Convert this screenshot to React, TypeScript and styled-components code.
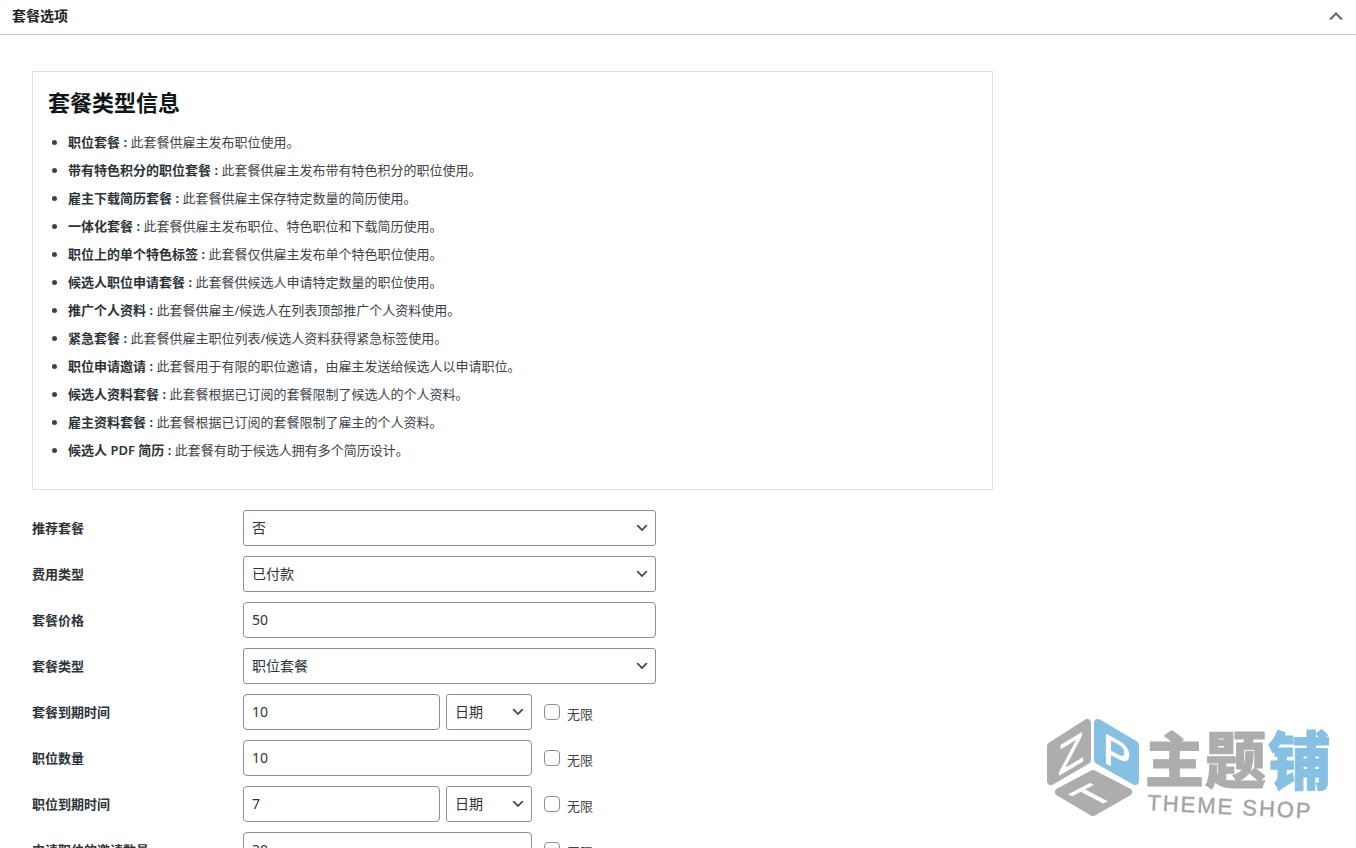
import React, { useState } from 'react';
import styled, { createGlobalStyle } from 'styled-components';

const GlobalStyle = createGlobalStyle`
  *, *::before, *::after { box-sizing: border-box; }
  body {
    margin: 0;
    background: #fff;
    color: #3c434a;
    font-family: 'Noto Sans', 'Noto Sans CJK SC', sans-serif;
    font-size: 13px;
    line-height: 18px;
  }
`;

const Page = styled.div`
  min-height: 100vh;
`;

const PanelHeader = styled.header`
  display: flex;
  align-items: center;
  justify-content: space-between;
  height: 35px;
  padding: 0 10px 2px 12px;
  border-bottom: 1px solid #c3c4c7;
`;

const PanelTitle = styled.h2`
  margin: 0;
  font-size: 14px;
  line-height: 20px;
  font-weight: 600;
  color: #1d2327;
`;

const ToggleButton = styled.button`
  display: block;
  width: 20px;
  height: 20px;
  padding: 0;
  border: 0;
  background: none;
  color: #646970;
  cursor: pointer;

  svg { display: block; fill: currentColor; }
`;

const PanelBody = styled.main`
  padding: 36px 32px 0;
`;

const InfoBox = styled.section`
  max-width: 961px;
  padding: 15px 15px 25px;
  margin-bottom: 20px;
  border: 1px solid #dfdfdf;
`;

const InfoTitle = styled.h1`
  margin: 0 0 11px;
  font-size: 22px;
  line-height: 30px;
  font-weight: 600;
  color: #101517;
`;

const InfoList = styled.ul`
  margin: 0;
  padding: 0 0 0 20px;
  list-style: disc;
`;

const InfoItem = styled.li`
  line-height: 28px;

  strong { font-weight: 600; color: #2c3338; }
`;

const Form = styled.form`
  display: flex;
  flex-direction: column;
  gap: 10px;
`;

const FieldRow = styled.div`
  display: grid;
  grid-template-columns: 211px minmax(0, 413px);
  align-items: center;
`;

const FieldLabel = styled.label`
  font-weight: 600;
  color: #2c3338;
`;

const Controls = styled.div`
  display: flex;
  align-items: center;
  gap: 6px;
`;

const TextInput = styled.input`
  flex: 1;
  min-width: 0;
  height: 36px;
  padding: 0 8px 2px;
  border: 1px solid #8c8f94;
  border-radius: 4px;
  background: #fff;
  color: #2c3338;
  font: inherit;
  font-size: 14px;
`;

const Select = styled.select<{ $compact?: boolean }>`
  ${({ $compact }) => ($compact ? 'width: 86px;' : 'flex: 1;')}
  min-width: 0;
  height: 36px;
  padding: 0 24px 1px 8px;
  border: 1px solid #8c8f94;
  border-radius: 3px;
  appearance: none;
  background: #fff
    url("data:image/svg+xml,%3Csvg width='20' height='20' viewBox='0 0 20 20' xmlns='http://www.w3.org/2000/svg'%3E%3Cpath d='M5 6l5 5 5-5 2 1-7 7-7-7 2-1z' fill='%23444'/%3E%3C/svg%3E")
    no-repeat right 5px center / 16px 16px;
  color: #2c3338;
  font: inherit;
  font-size: 14px;
`;

const UnlimitedLabel = styled.label`
  display: flex;
  align-items: center;
  gap: 7px;
  width: 124px;
  margin-right: -6px;
  padding-left: 6px;

  span { padding-top: 4px; }
`;

const Checkbox = styled.input`
  appearance: none;
  width: 16px;
  height: 16px;
  margin: 0;
  border: 1px solid #8c8f94;
  border-radius: 4px;
  background: #fff;

  &:checked { background: #2271b1; }
`;

const Watermark = styled.svg`
  position: fixed;
  right: 16px;
  bottom: 18px;
  pointer-events: none;
`;

const packageTypes = [
  ['职位套餐', '此套餐供雇主发布职位使用。'],
  ['带有特色积分的职位套餐', '此套餐供雇主发布带有特色积分的职位使用。'],
  ['雇主下载简历套餐', '此套餐供雇主保存特定数量的简历使用。'],
  ['一体化套餐', '此套餐供雇主发布职位、特色职位和下载简历使用。'],
  ['职位上的单个特色标签', '此套餐仅供雇主发布单个特色职位使用。'],
  ['候选人职位申请套餐', '此套餐供候选人申请特定数量的职位使用。'],
  ['推广个人资料', '此套餐供雇主/候选人在列表顶部推广个人资料使用。'],
  ['紧急套餐', '此套餐供雇主职位列表/候选人资料获得紧急标签使用。'],
  ['职位申请邀请', '此套餐用于有限的职位邀请，由雇主发送给候选人以申请职位。'],
  ['候选人资料套餐', '此套餐根据已订阅的套餐限制了候选人的个人资料。'],
  ['雇主资料套餐', '此套餐根据已订阅的套餐限制了雇主的个人资料。'],
  ['候选人 PDF 简历', '此套餐有助于候选人拥有多个简历设计。'],
];

type Field = {
  id: string;
  label: string;
  kind: 'select' | 'text' | 'limit' | 'period';
  value: string;
};

const fields: Field[] = [
  { id: 'featured', label: '推荐套餐', kind: 'select', value: '否' },
  { id: 'charges', label: '费用类型', kind: 'select', value: '已付款' },
  { id: 'price', label: '套餐价格', kind: 'text', value: '50' },
  { id: 'type', label: '套餐类型', kind: 'select', value: '职位套餐' },
  { id: 'expiry', label: '套餐到期时间', kind: 'period', value: '10' },
  { id: 'jobs', label: '职位数量', kind: 'limit', value: '10' },
  { id: 'job-expiry', label: '职位到期时间', kind: 'period', value: '7' },
  { id: 'invites', label: '申请职位的邀请数量', kind: 'limit', value: '30' },
];

function PackageField({ id, label, kind, value }: Field) {
  return (
    <FieldRow>
      <FieldLabel htmlFor={id}>{label}</FieldLabel>
      <Controls>
        {kind === 'select' ? (
          <Select id={id} defaultValue={value}>
            <option>{value}</option>
          </Select>
        ) : (
          <TextInput id={id} type="text" defaultValue={value} />
        )}
        {kind === 'period' && (
          <Select $compact aria-label={`${label}单位`} defaultValue="日期">
            <option>日期</option>
          </Select>
        )}
        {(kind === 'period' || kind === 'limit') && (
          <UnlimitedLabel>
            <Checkbox type="checkbox" />
            <span>无限</span>
          </UnlimitedLabel>
        )}
      </Controls>
    </FieldRow>
  );
}

function ThemeShopMark() {
  return (
    <Watermark width="300" height="120" viewBox="0 0 300 120" aria-hidden="true">
      <g strokeLinejoin="round" strokeWidth="8">
        <path d="M11 36L47 13V50L11 71Z" fill="#adadad" stroke="#adadad" />
        <path d="M58 13L95 35V71L58 50Z" fill="#86c1e3" stroke="#86c1e3" />
        <path d="M19 82L53 64L88 82L53 102Z" fill="#adadad" stroke="#adadad" />
      </g>
      <g
        fill="#fff"
        stroke="#fff"
        strokeWidth="1"
        fontFamily="'Liberation Sans', sans-serif"
        textAnchor="middle"
      >
        <text transform="translate(31 58) skewY(-31)" fontSize="42">Z</text>
        <text transform="translate(77 59) skewY(28)" fontSize="42">P</text>
        <text transform="matrix(0.88 -0.46 0.88 0.46 65 92)" fontSize="42">T</text>
      </g>
      <g
        fontFamily="'Noto Sans CJK SC', sans-serif"
        fontWeight="900"
        strokeWidth="1"
        strokeLinejoin="round"
      >
        <text x="105" y="72" fontSize="59" fill="#adadad" stroke="#adadad">主</text>
        <text x="165" y="73" fontSize="61" fill="#adadad" stroke="#adadad">题</text>
        <text x="228" y="74" fontSize="63" fill="#86c1e3" stroke="#86c1e3">铺</text>
      </g>
      <text
        transform="translate(107 100) rotate(3)"
        fontFamily="'Liberation Sans', sans-serif"
        fontSize="22"
        letterSpacing="2"
        fill="#a4a4a4"
        stroke="#a4a4a4"
        strokeOpacity="0.5"
      >
        THEME SHOP
      </text>
    </Watermark>
  );
}

export default function App() {
  const [open, setOpen] = useState(true);

  return (
    <Page>
      <GlobalStyle />
      <PanelHeader>
        <PanelTitle>套餐选项</PanelTitle>
        <ToggleButton
          type="button"
          aria-label="套餐选项"
          aria-expanded={open}
          onClick={() => setOpen(!open)}
        >
          <svg width="20" height="20" viewBox="0 0 20 20">
            <path d="M5 14l5-5 5 5 2-1-7-7-7 7 2 1z" />
          </svg>
        </ToggleButton>
      </PanelHeader>
      {open && (
        <PanelBody>
          <InfoBox>
            <InfoTitle>套餐类型信息</InfoTitle>
            <InfoList>
              {packageTypes.map(([name, text]) => (
                <InfoItem key={name}>
                  <strong>{name} :</strong> {text}
                </InfoItem>
              ))}
            </InfoList>
          </InfoBox>
          <Form>
            {fields.map((field) => (
              <PackageField key={field.id} {...field} />
            ))}
          </Form>
        </PanelBody>
      )}
      <ThemeShopMark />
    </Page>
  );
}
